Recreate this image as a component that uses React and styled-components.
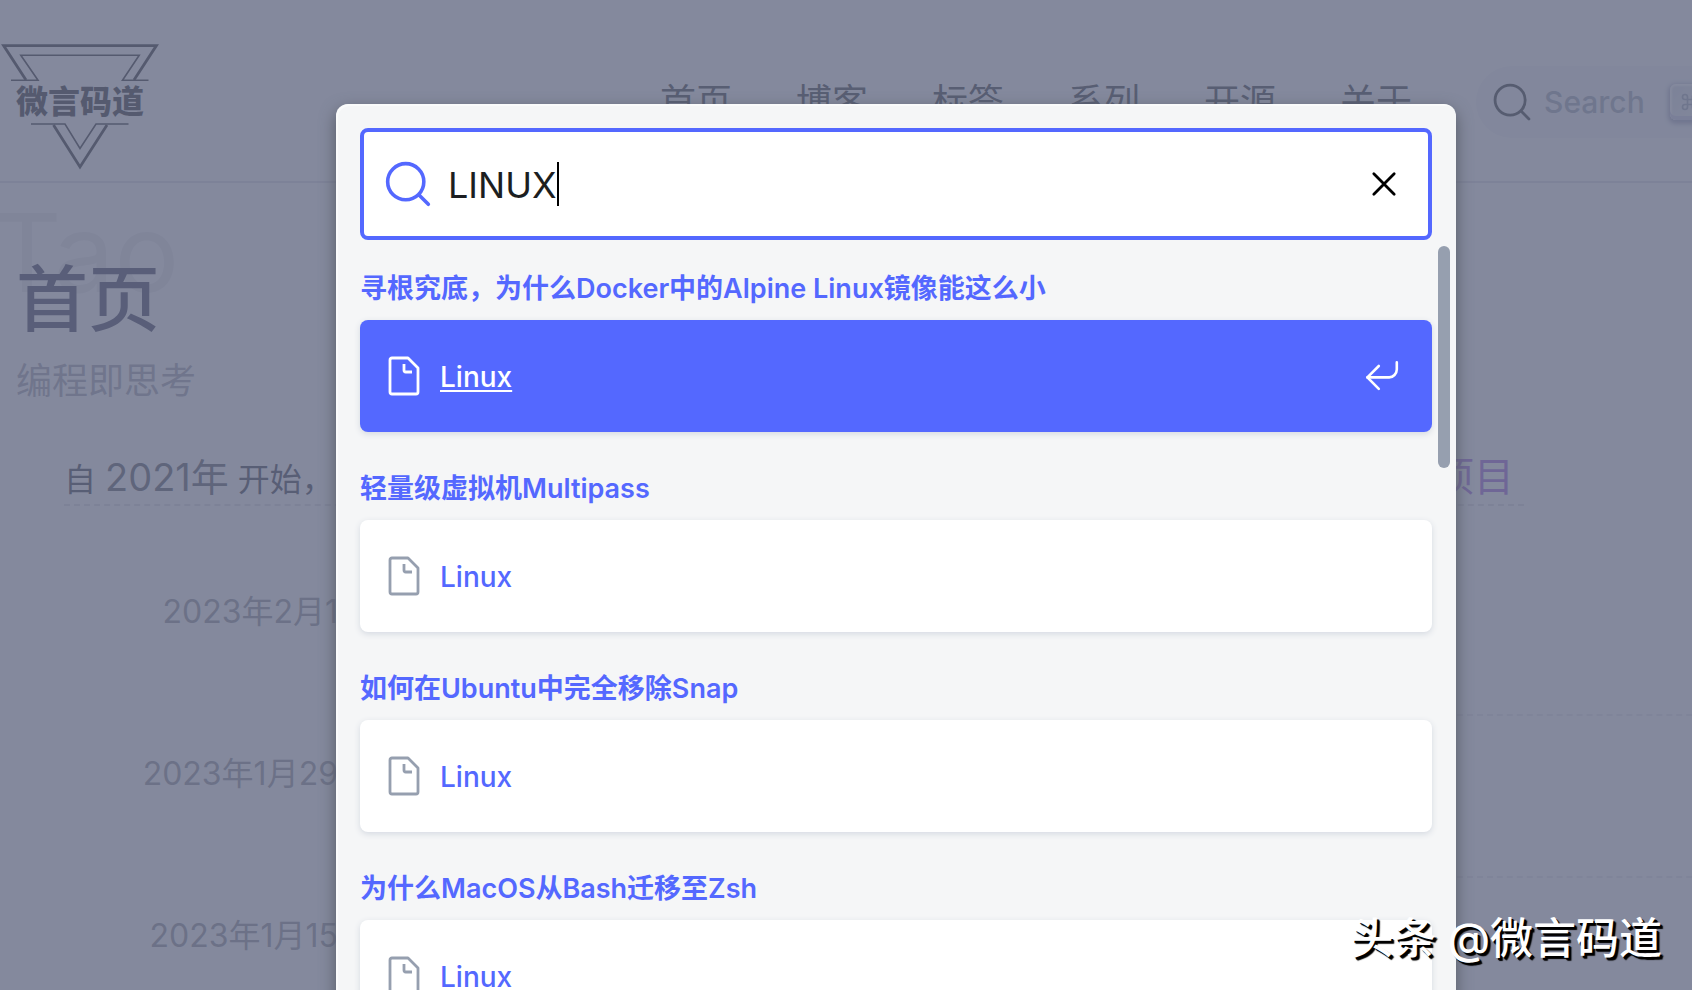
import React from "react";
import styled, { createGlobalStyle } from "styled-components";

const GlobalStyle = createGlobalStyle`
  *, *::before, *::after { box-sizing: border-box; }
  body {
    margin: 0;
    background: #fff;
    font-family: Inter, "Noto Sans CJK SC", sans-serif;
  }
`;

const Viewport = styled.div`
  position: relative;
  height: 100vh;
  overflow: hidden;
`;

const Page = styled.div`
  width: calc(100% + 100px);
  min-height: 100%;
`;

const Header = styled.header`
  display: flex;
  align-items: center;
  justify-content: space-between;
  height: 183px;
  padding: 28px 24px 0 0;
  border-bottom: 2px solid #dddde4;
`;

const LogoLink = styled.a`
  display: block;
  padding-top: 4px;
  color: #14161c;
  svg { display: block; }
`;

const HeaderEnd = styled.div`
  display: flex;
  align-items: center;
  gap: 64px;
  margin-bottom: 6px;
`;

const Nav = styled.nav`
  display: flex;
  gap: 64px;
`;

const NavLink = styled.a`
  color: #26282e;
  font-size: 36px;
  line-height: 48px;
  text-decoration: none;
`;

const SearchButton = styled.button`
  display: flex;
  align-items: center;
  gap: 12px;
  width: 292px;
  height: 72px;
  padding: 0 6px 0 16px;
  border: 0;
  border-radius: 36px;
  background: #f2f4f8;
  color: #1c1e21;
  font: inherit;
`;

const SearchButtonLabel = styled.span`
  flex: 1;
  color: #969faf;
  font-size: 30px;
  font-weight: 500;
  text-align: left;
`;

const Key = styled.kbd`
  display: flex;
  align-items: center;
  justify-content: center;
  width: 40px;
  height: 36px;
  border-radius: 6px;
  background: linear-gradient(-225deg, #d5dbe4, #f8f8f8);
  box-shadow: inset 0 -4px 0 0 #cdcde6, inset 0 0 2px 2px #fff, 0 2px 4px 2px rgba(30, 35, 90, 0.4);
  color: #969faf;
  font: inherit;
  font-size: 20px;
`;

const Intro = styled.section`
  position: relative;
  padding: 72px 0 0 16px;
`;

const Backdrop = styled.span`
  position: absolute;
  left: -8px;
  top: 2px;
  color: #eaeaec;
  font-size: 108px;
  line-height: 136px;
`;

const Title = styled.h1`
  position: relative;
  margin: 0;
  color: #2a2c4a;
  font-size: 72px;
  font-weight: 500;
  line-height: 88px;
`;

const Subtitle = styled.p`
  position: relative;
  margin: 14px 0 0;
  color: #9a9ca8;
  font-size: 36px;
  line-height: 48px;
`;

const Summary = styled.div`
  display: flex;
  align-items: baseline;
  justify-content: space-between;
  margin: 48px 268px 0 64px;
  border-bottom: 2px dashed #dcdce2;
  color: #26283a;
  font-size: 32px;
  line-height: 48px;
`;

const Year = styled.span`
  color: #484a58;
  font-size: 38px;
`;

const Projects = styled.a`
  padding-right: 10px;
  color: #9653da;
  font-size: 40px;
  text-decoration: none;
`;

const Timeline = styled.ol`
  margin: 48px 0 0;
  padding: 0;
  list-style: none;
`;

const TimelineRow = styled.li`
  display: grid;
  grid-template-columns: 370px 1fr;
  height: 162px;
`;

const TimelineDate = styled.time`
  padding-top: 38px;
  color: #85888f;
  font-size: 32px;
  line-height: 40px;
  text-align: right;
`;

const TimelineBody = styled.div`
  margin-left: 40px;
  border-bottom: 2px dashed #e4e4ea;
`;

const Overlay = styled.div`
  position: absolute;
  inset: 0 -100px 0 0;
  padding-top: 104px;
  background: rgba(101, 108, 133, 0.8);
`;

const Modal = styled.div`
  display: flex;
  flex-direction: column;
  max-width: 1120px;
  height: 1200px;
  margin: 0 auto;
  border-radius: 12px;
  background: #f5f6f7;
  box-shadow: inset 2px 2px 0 0 rgba(255, 255, 255, 0.5), 0 6px 16px 0 #555a64;
`;

const SearchForm = styled.form`
  display: flex;
  align-items: center;
  height: 112px;
  margin: 24px 24px 0;
  padding: 0 24px 0 20px;
  border: 4px solid #5468ff;
  border-radius: 8px;
  background: #fff;
`;

const SearchLabel = styled.label`
  display: flex;
  margin-right: 16px;
  color: #5468ff;
`;

const SearchInput = styled.input`
  field-sizing: content;
  padding: 2px 0 0;
  border: 0;
  outline: 0;
  background: transparent;
  color: #1c1e21;
  font: inherit;
  font-size: 36px;
  line-height: 48px;
`;

const Caret = styled.span`
  width: 2px;
  height: 44px;
  background: #000;
`;

const ResetButton = styled.button`
  display: flex;
  margin-left: auto;
  padding: 0;
  border: 0;
  background: transparent;
  color: #000;
`;

const ModalBody = styled.div`
  display: flex;
  gap: 6px;
  padding: 0 6px 0 24px;
`;

const Results = styled.div`
  flex: 1;
  padding-top: 16px;
`;

const ScrollThumb = styled.div`
  width: 12px;
  height: 222px;
  margin-top: 6px;
  border-radius: 6px;
  background: #969faf;
`;

const ResultGroup = styled.section`
  margin-bottom: 24px;
`;

const ResultSource = styled.h2`
  margin: 0;
  padding-top: 2px;
  color: #5468ff;
  font-size: 27px;
  font-weight: 600;
  line-height: 62px;
`;

const Hit = styled.a`
  display: flex;
  align-items: center;
  gap: 16px;
  height: 112px;
  padding: 0 30px 0 24px;
  border-radius: 8px;
  background: ${(p) => (p.$selected ? "#5468ff" : "#fff")};
  box-shadow: 0 2px 6px 0 #d4d9e1;
  color: ${(p) => (p.$selected ? "#fff" : "#969faf")};
  text-decoration: none;
`;

const HitTitle = styled.mark`
  flex: 1;
  padding-top: 2px;
  background: none;
  color: ${(p) => (p.$selected ? "#fff" : "#5468ff")};
  font-size: 28px;
  font-weight: 500;
  line-height: 40px;
  span {
    text-decoration: ${(p) => (p.$selected ? "underline" : "none")};
    text-decoration-thickness: 2px;
    text-underline-offset: 3px;
  }
`;

const Watermark = styled.div`
  position: absolute;
  right: 30px;
  bottom: 22px;
  color: #fff;
  font-size: 43px;
  font-weight: 500;
  line-height: 60px;
  text-shadow: 2px 2px 0 #000, 3px 3px 1px #000;
`;

const Logo = () => (
  <svg width="160" height="128" viewBox="0 0 160 128" fill="none" stroke="currentColor" role="img" aria-label="微言码道">
    <path strokeWidth="2.8" d="M26 37 3.6 2.6H156.4L134 37M53.5 82 80 124 107 82" />
    <path strokeWidth="1.6" d="M11 37.3H38L20.8 12.3H139.2L122.5 37.3H148.5M31 81H65L80 105.5 96 81H128.5" />
    <text x="80" y="70" textAnchor="middle" fill="currentColor" stroke="none" fontSize="32" fontWeight="900" fontFamily='"Noto Sans CJK SC", sans-serif'>
      微言码道
    </text>
  </svg>
);

const Magnifier = ({ size, weight }) => (
  <svg width={size} height={size} viewBox="0 0 20 20" aria-hidden="true">
    <path
      d="M14.386 14.386l4.0877 4.0877-4.0877-4.0877c-2.9418 2.9419-7.7115 2.9419-10.6533 0-2.9419-2.9418-2.9419-7.7115 0-10.6533 2.9418-2.9419 7.7115-2.9419 10.6533 0 2.9419 2.9418 2.9419 7.7115 0 10.6533z"
      stroke="currentColor" strokeWidth={weight} fill="none" strokeLinecap="round" strokeLinejoin="round"
    />
  </svg>
);

const PageIcon = () => (
  <svg width="40" height="40" viewBox="0 0 20 20" aria-hidden="true">
    <path
      d="M17 6v12c0 .52-.2 1-1 1H4c-.7 0-1-.33-1-1V2c0-.55.42-1 1-1h8l5 5zM14 8h-3.13c-.51 0-.87-.34-.87-.87V4"
      stroke="currentColor" strokeWidth="1.4" fill="none" strokeLinejoin="round"
    />
  </svg>
);

const EnterIcon = () => (
  <svg width="40" height="40" viewBox="0 0 20 20" fill="none" stroke="currentColor" strokeWidth="1.3" strokeLinecap="round" strokeLinejoin="round" aria-hidden="true">
    <path d="M17.4 3.2v3.6c0 2-1.8 3.9-3.8 3.9H2.7" />
    <path d="M8.4 16.4l-5.7-5.7 5.7-5.7" />
  </svg>
);

const CloseIcon = () => (
  <svg width="40" height="40" viewBox="0 0 20 20" fill="none" stroke="currentColor" strokeWidth="1.4" strokeLinecap="round" aria-hidden="true">
    <path d="M4.91 4.91 15.09 15.09M15.09 4.91 4.91 15.09" />
  </svg>
);

const CommandIcon = () => (
  <svg width="20" height="20" viewBox="0 0 24 24" fill="none" stroke="currentColor" strokeWidth="2" aria-hidden="true">
    <path d="M15 6v12a3 3 0 1 0 3-3H6a3 3 0 1 0 3 3V6a3 3 0 1 0-3 3h12a3 3 0 1 0-3-3" />
  </svg>
);

const navItems = ["首页", "博客", "标签", "系列", "开源", "关于"];

const dates = ["2023年2月1日", "2023年1月29日", "2023年1月15日"];

const results = [
  { source: "寻根究底，为什么Docker中的Alpine Linux镜像能这么小", selected: true },
  { source: "轻量级虚拟机Multipass" },
  { source: "如何在Ubuntu中完全移除Snap" },
  { source: "为什么MacOS从Bash迁移至Zsh" },
];

export default function App() {
  return (
    <Viewport>
      <GlobalStyle />
      <Page>
        <Header>
          <LogoLink href="#"><Logo /></LogoLink>
          <HeaderEnd>
            <Nav>
              {navItems.map((item) => <NavLink href="#" key={item}>{item}</NavLink>)}
            </Nav>
            <SearchButton type="button">
              <Magnifier size={40} weight={1.4} />
              <SearchButtonLabel>Search</SearchButtonLabel>
              <Key><CommandIcon /></Key>
              <Key>K</Key>
            </SearchButton>
          </HeaderEnd>
        </Header>
        <Intro>
          <Backdrop aria-hidden="true">Tao</Backdrop>
          <Title>首页</Title>
          <Subtitle>编程即思考</Subtitle>
        </Intro>
        <Summary>
          <span>自 <Year>2021年</Year> 开始，</span>
          <Projects href="#">项目</Projects>
        </Summary>
        <Timeline>
          {dates.map((date) => (
            <TimelineRow key={date}>
              <TimelineDate>{date}</TimelineDate>
              <TimelineBody />
            </TimelineRow>
          ))}
        </Timeline>
      </Page>
      <Overlay>
        <Modal role="dialog" aria-modal="true" aria-label="Search">
          <SearchForm>
            <SearchLabel htmlFor="search-input" aria-label="Search">
              <Magnifier size={48} weight={1.5} />
            </SearchLabel>
            <SearchInput id="search-input" type="text" defaultValue="LINUX" />
            <Caret />
            <ResetButton type="reset" aria-label="Clear the query"><CloseIcon /></ResetButton>
          </SearchForm>
          <ModalBody>
            <Results>
              {results.map(({ source, selected }) => (
                <ResultGroup key={source}>
                  <ResultSource>{source}</ResultSource>
                  <Hit href="#" $selected={selected}>
                    <PageIcon />
                    <HitTitle $selected={selected}><span>Linux</span></HitTitle>
                    {selected && <EnterIcon />}
                  </Hit>
                </ResultGroup>
              ))}
            </Results>
            <ScrollThumb />
          </ModalBody>
        </Modal>
      </Overlay>
      <Watermark>头条 @微言码道</Watermark>
    </Viewport>
  );
}
